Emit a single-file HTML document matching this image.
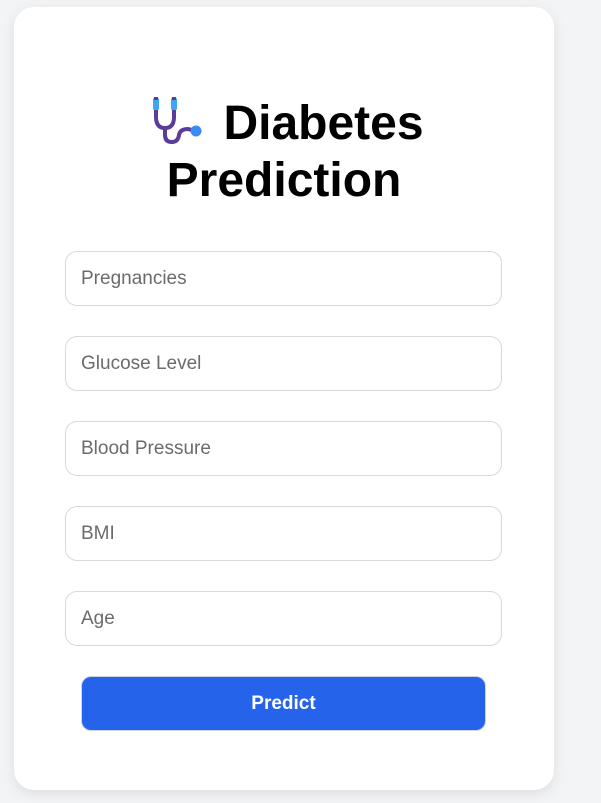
<!DOCTYPE html>
<html><head><meta charset="utf-8"><style>
html,body{margin:0;padding:0;width:601px;height:803px;background:#f3f4f6;font-family:"Liberation Sans",Arial,sans-serif;overflow:hidden}
.card{position:absolute;left:14px;top:7px;width:540px;height:783px;background:#fff;border-radius:20px;box-shadow:0 4px 14px rgba(0,0,0,0.09)}
h1{position:absolute;left:0;top:88px;width:540px;margin:0;text-align:center;font-size:48px;font-weight:bold;line-height:57px;color:#000}
.l1{position:relative;left:4px}
.ic{display:inline-block;width:50px;height:50px;vertical-align:-8px;margin-right:21px}
.in{position:absolute;left:51px;width:435px;height:53px;border:1px solid #d9d9d9;border-radius:12px;font-size:19px;color:#6b6b6b;line-height:53px}
.in span{margin-left:15px}
.btn{position:absolute;left:67px;top:669px;width:405px;height:55px;background:#2563eb;border-radius:10px;color:#fff;font-weight:bold;font-size:19px;text-align:center;line-height:53px;border:1px solid #d0d4dc;box-sizing:border-box}
</style></head><body>
<div class="card">
<h1><span class="l1"><svg class="ic" viewBox="0 0 50 50"><path d="M4 11 V20 Q4 31 13 31 Q22 31 22 20 V11" fill="none" stroke="#5b3c99" stroke-width="4"/><rect x="1" y="1" width="6" height="12" rx="1.5" fill="#3ea6f5"/><rect x="19" y="1" width="6" height="12" rx="1.5" fill="#3ea6f5"/><rect x="2" y="0" width="4" height="3" fill="#5b3c99"/><rect x="20" y="0" width="4" height="3" fill="#5b3c99"/><path d="M13 31 V38 Q13 45 20 45 Q26 45 27 38 Q28 32 36 32 L40 33" fill="none" stroke="#5b3c99" stroke-width="4"/><circle cx="44" cy="34" r="5.5" fill="#3b8cf0"/></svg>Diabetes</span><br>Prediction</h1>
<div class="in" style="top:244px"><span>Pregnancies</span></div>
<div class="in" style="top:329px"><span>Glucose Level</span></div>
<div class="in" style="top:414px"><span>Blood Pressure</span></div>
<div class="in" style="top:499px"><span>BMI</span></div>
<div class="in" style="top:584px"><span>Age</span></div>
<div class="btn">Predict</div>
</div>
</body></html>
